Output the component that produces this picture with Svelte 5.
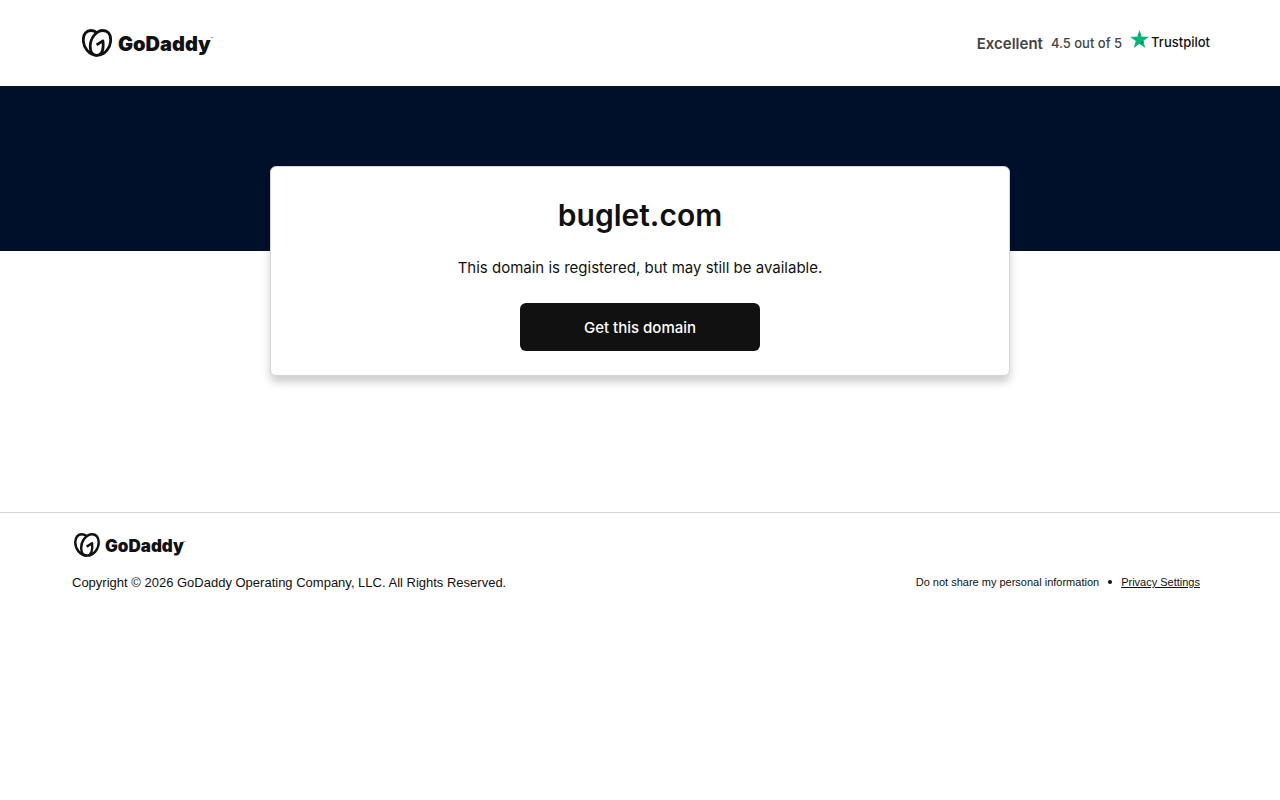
<script>
  const domain = 'buglet.com';
</script>

{#snippet logo()}
  <svg class="mark" viewBox="0 0 30 28" aria-hidden="true">
    <g fill="none" stroke="#111" stroke-width="2.8" stroke-linejoin="round">
      <path d="M15 26.4C7 26.4 1.3 18.4 1.3 10.8C1.3 4.8 4.5 1.5 9 1.5C11.5 1.5 13.6 2.5 15.4 4.2" />
      <path d="M15 26.4C23 26.4 28.7 18.4 28.7 10.8C28.7 4.8 25.5 1.5 21 1.5C14 1.5 8.2 9.5 8.2 17.4C8.2 22.8 10.6 26.4 15 26.4C19.8 26.4 22 20.5 20.9 11.9L14.6 15.9" />
    </g>
  </svg>
  <span class="word">GoDaddy</span><span class="tm">™</span>
{/snippet}

<header class="top">
  <a class="logo" href="/" aria-label="GoDaddy">{@render logo()}</a>
  <a class="rating" href="#trustpilot">
    <strong>Excellent</strong>
    <span class="score">4.5 out of 5</span>
    <span class="pilot">
      <svg class="star" viewBox="0 0 20 19" aria-hidden="true">
        <path fill="#00b67a" d="M10 0l2.4 7.2H20l-6.1 4.5L16.2 19 10 14.5 3.8 19l2.3-7.3L0 7.2h7.6z" />
        <path fill="#005128" d="M14.4 13.3l-.5-1.6L10 14.5z" />
      </svg>
      <span>Trustpilot</span>
    </span>
  </a>
</header>

<main>
  <section class="card">
    <h1>{domain}</h1>
    <p>This domain is registered, but may still be available.</p>
    <button type="button">Get this domain</button>
  </section>
</main>

<footer>
  <a class="logo small" href="/" aria-label="GoDaddy">{@render logo()}</a>
  <div class="legal">
    <span class="copy">Copyright © 2026 GoDaddy Operating Company, LLC. All Rights Reserved.</span>
    <nav>
      <a href="#share">Do not share my personal information</a>
      <span class="dot"></span>
      <a class="line" href="#privacy">Privacy Settings</a>
    </nav>
  </div>
</footer>

<style>
  :global(body) {
    margin: 0;
    background: #fff;
    color: #111;
    font-family: Inter, sans-serif;
  }
  a {
    color: inherit;
    text-decoration: none;
  }
  .top {
    display: flex;
    align-items: center;
    justify-content: space-between;
    box-sizing: border-box;
    height: 86px;
    padding: 0 70px 0 82px;
  }
  .logo {
    display: flex;
    align-items: center;
    gap: 6px;
    width: max-content;
    font-weight: 900;
    font-size: 20px;
    line-height: 28px;
  }
  .mark {
    width: 30px;
    height: 28px;
  }
  .word {
    line-height: 26px;
    padding-top: 2px;
  }
  .tm {
    align-self: flex-start;
    margin-left: -6px;
    font-size: 4px;
    font-weight: 400;
    line-height: 20px;
  }
  .rating {
    display: flex;
    align-items: center;
    gap: 8px;
    color: #444;
    font-size: 13px;
    font-weight: 500;
  }
  .rating strong {
    font-size: 15px;
    font-weight: 600;
  }
  .pilot {
    display: flex;
    align-items: center;
    gap: 2px;
    padding-bottom: 2px;
    color: #111;
  }
  .star {
    width: 19px;
    height: 18px;
    margin-bottom: 6px;
  }
  main {
    padding: 80px 20px 136px;
    background: linear-gradient(#00102b 165px, transparent 165px);
  }
  .card {
    display: flex;
    flex-direction: column;
    align-items: center;
    box-sizing: border-box;
    max-width: 740px;
    margin: 0 auto;
    padding: 24px;
    border: 1px solid #d6d6d6;
    border-radius: 6px;
    background: #fff;
    box-shadow: 0 6px 8px rgba(0, 0, 0, 0.2);
  }
  h1 {
    margin: 0;
    font-size: 30px;
    font-weight: 600;
    line-height: 48px;
  }
  p {
    margin: 16px 0 22px;
    font-size: 15px;
    line-height: 26px;
  }
  button {
    width: 240px;
    height: 48px;
    border: 0;
    border-radius: 6px;
    background: #111;
    color: #fff;
    font: 500 15px Inter, sans-serif;
  }
  footer {
    padding: 20px 80px 20px 72px;
    border-top: 1px solid #d6d6d6;
  }
  .small {
    margin-left: 2px;
    gap: 5px;
    font-size: 17px;
    line-height: 24px;
  }
  .small .mark {
    width: 26px;
    height: 24px;
  }
  .small .word {
    line-height: 22px;
  }
  .legal {
    display: flex;
    align-items: flex-start;
    justify-content: space-between;
    margin-top: 14px;
    font-family: 'Liberation Sans', sans-serif;
  }
  .copy {
    font-size: 13px;
    line-height: 24px;
  }
  nav {
    display: flex;
    align-items: center;
    gap: 9px;
    font-size: 11px;
    line-height: 22px;
  }
  .dot {
    width: 4px;
    height: 4px;
    border-radius: 50%;
    background: #111;
  }
  .line {
    text-decoration: underline;
  }
</style>
